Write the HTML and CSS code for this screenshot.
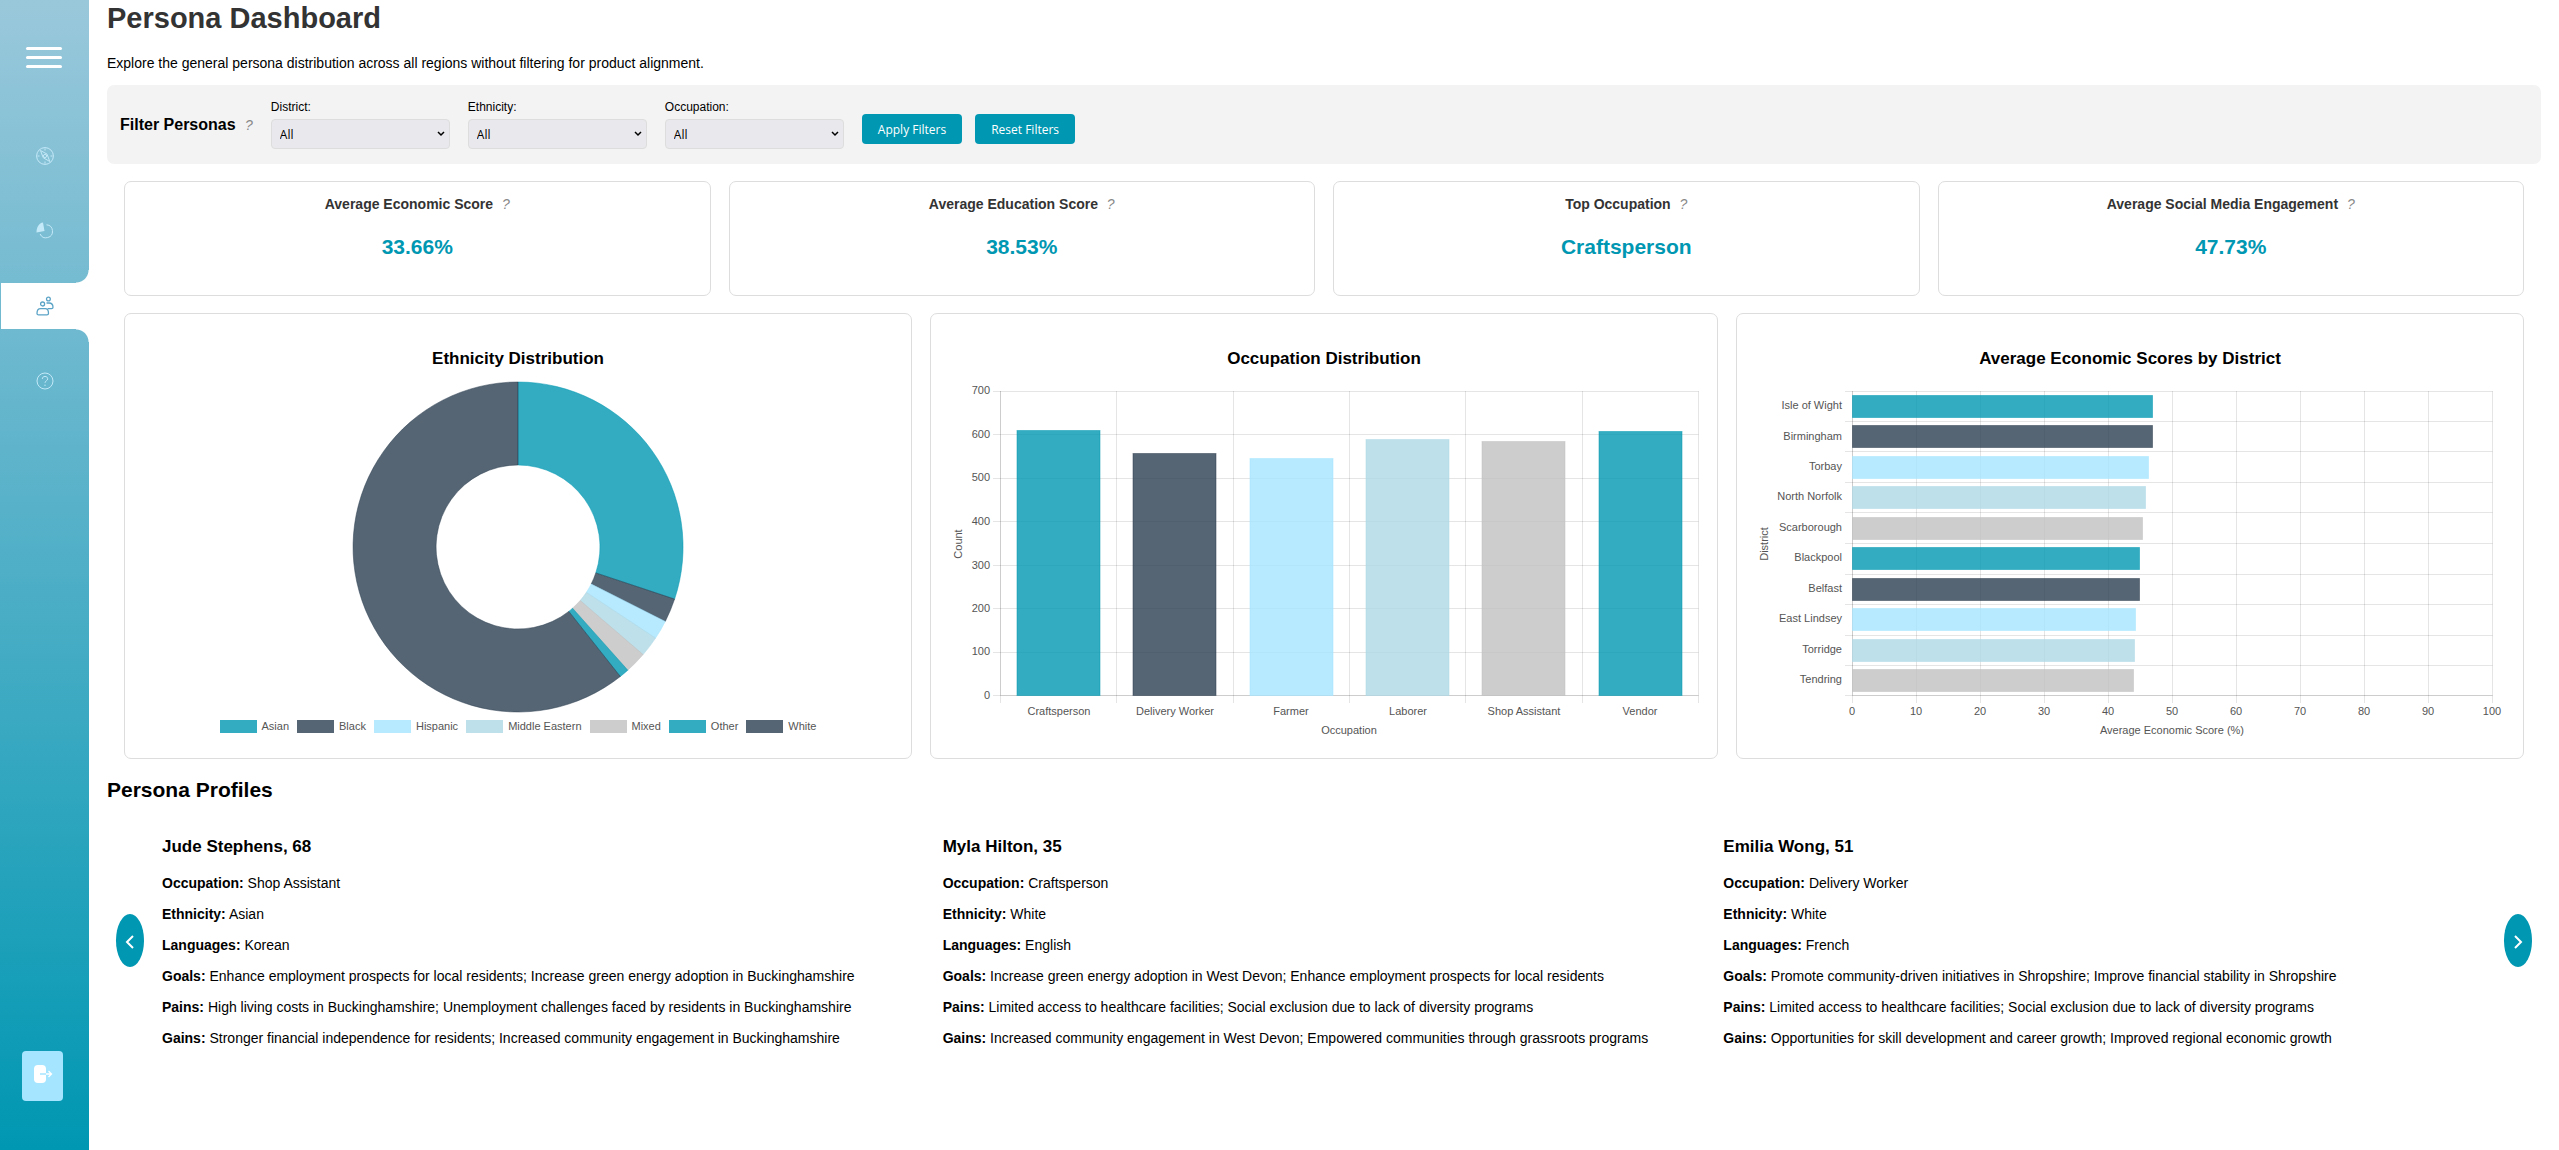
FILE: index.html
```html
<!DOCTYPE html>
<html lang="en">
<head>
<meta charset="utf-8">
<title>Persona Dashboard</title>
<link rel="stylesheet" href="styles.css">
</head>
<body>
<div class="layout">
  <nav class="sidebar" aria-label="Main">
    <button class="menu-toggle" aria-label="Toggle menu"><span></span><span></span><span></span></button>
    <ul class="nav-list">
      <li><a class="nav-link" href="#explore" aria-label="Explore">
        <svg width="18" height="18" viewBox="0 0 18 18" fill="none" stroke="currentColor"><circle cx="9" cy="9" r="8.400"/><path d="M4.500 3.500l6.500 3.600 2.800 7.400-6.600-3.800z"/><circle cx="9" cy="9" r="1.600"/><path d="M9 1.500v2M9 14.500v2M1.500 9h2M14.500 9h2"/></svg>
      </a></li>
      <li><a class="nav-link" href="#analytics" aria-label="Analytics">
        <svg width="18" height="18" viewBox="0 0 18 18" fill="none" stroke="currentColor"><path d="M.5 10.500C.500 5 3 1 7 .5l1.500 8.500z" fill="currentColor" stroke="none"/><path d="M10.500 2.800a6.500 6.500 0 1 1-6.400 9.200"/></svg>
      </a></li>
      <li class="active"><a class="nav-link" href="#personas" aria-label="Personas" aria-current="page">
        <svg width="18" height="20" viewBox="0 0 18 20" fill="none" stroke="currentColor" stroke-width="1.300"><circle cx="12.400" cy="3" r="1.900"/><circle cx="6.600" cy="8" r="2"/><path d="M10.500 7h2.500c2.600 0 4 1.800 4 4.300 0 .9-.6 1.300-1.400 1.300h-4"/><path d="M1 17.200c0-3 1.300-4.600 3.600-4.600h4.600c2.200 0 3.300 1.600 3.300 4.600 0 1-.5 1.600-1.500 1.600H2.500c-1 0-1.500-.6-1.500-1.600z"/></svg>
      </a></li>
      <li><a class="nav-link" href="#help" aria-label="Help">
        <svg width="18" height="18" viewBox="0 0 18 18" fill="none" stroke="currentColor"><circle cx="9" cy="9" r="8"/><path d="M6.300 7c0-1.600 1.200-2.600 2.700-2.600s2.700 1 2.700 2.400c0 2-2.700 2-2.700 4M9 12.600v1.400"/></svg>
      </a></li>
    </ul>
    <button class="logout" aria-label="Log out">
      <svg width="20" height="20" viewBox="0 0 20 20"><rect x="1" y="1" width="12" height="18" rx="4" fill="#fff"/><path d="M7 10h6" stroke="#a5e5ff" stroke-width="1.500"/><path d="M13 10h5M15.500 7l3 3-3 3" fill="none" stroke="#fff" stroke-width="1.300"/></svg>
    </button>
  </nav>

  <main class="content">
    <h1>Persona Dashboard</h1>
    <p class="intro">Explore the general persona distribution across all regions without filtering for product alignment.</p>

    <form class="filters">
      <h2 class="filters-title">Filter Personas <i class="hint">?</i></h2>
      <div class="field"><label for="district">District:</label><select id="district"><option>All</option></select></div>
      <div class="field"><label for="ethnicity">Ethnicity:</label><select id="ethnicity"><option>All</option></select></div>
      <div class="field"><label for="occupation">Occupation:</label><select id="occupation"><option>All</option></select></div>
      <div class="actions">
        <button class="btn" type="button">Apply Filters</button>
        <button class="btn" type="button">Reset Filters</button>
      </div>
    </form>

    <section class="stats">
      <article class="card stat"><h3>Average Economic Score <i class="hint">?</i></h3><p>33.66%</p></article>
      <article class="card stat"><h3>Average Education Score <i class="hint">?</i></h3><p>38.53%</p></article>
      <article class="card stat"><h3>Top Occupation <i class="hint">?</i></h3><p>Craftsperson</p></article>
      <article class="card stat"><h3>Average Social Media Engagement <i class="hint">?</i></h3><p>47.73%</p></article>
    </section>

    <section class="charts">
      <article class="card chart">
        <h3>Ethnicity Distribution</h3>
        <svg class="plot" viewBox="0 0 750 337" role="img" aria-label="Ethnicity distribution">
          <path class="series teal" d="M375 7A165 165 0 0 1 531.600 224.100L452.800 197.900A82 82 0 0 0 375 90z"/>
          <path class="series navy" d="M531.600 224.100A165 165 0 0 1 522.300 246.400L448.200 209A82 82 0 0 0 452.800 197.900z"/>
          <path class="series sky" d="M522.300 246.400A165 165 0 0 1 512.600 263.100L443.400 217.300A82 82 0 0 0 448.200 209z"/>
          <path class="series powder" d="M512.600 263.100A165 165 0 0 1 500.100 279.600L437.200 225.500A82 82 0 0 0 443.400 217.300z"/>
          <path class="series grey" d="M500.100 279.600A165 165 0 0 1 484.800 295.200L429.500 233.200A82 82 0 0 0 437.200 225.500z"/>
          <path class="series teal" d="M484.800 295.200A165 165 0 0 1 477.300 301.500L425.800 236.400A82 82 0 0 0 429.500 233.200z"/>
          <path class="series navy" d="M477.300 301.500A165 165 0 1 1 375 7L375 90A82 82 0 1 0 425.800 236.400z"/>
        </svg>
        <ul class="legend">
          <li><span class="swatch teal"></span>Asian</li>
          <li><span class="swatch navy"></span>Black</li>
          <li><span class="swatch sky"></span>Hispanic</li>
          <li><span class="swatch powder"></span>Middle Eastern</li>
          <li><span class="swatch grey"></span>Mixed</li>
          <li><span class="swatch teal"></span>Other</li>
          <li><span class="swatch navy"></span>White</li>
        </ul>
      </article>

      <article class="card chart">
        <h3>Occupation Distribution</h3>
        <svg class="plot" viewBox="0 0 750 365" role="img" aria-label="Occupation distribution">
          <path class="grid" d="M44 16.500H749.500M44 59.500H749.500M44 103.500H749.500M44 146.500H749.500M44 190.500H749.500M44 233.500H749.500M44 277.500H749.500M44 320.500H749.500M51.500 16V328M167.500 16V328M284.500 16V328M400.500 16V328M516.500 16V328M633.500 16V328M749.500 16V328"/>
          <path class="grid" d="M51.500 16V320.500H749.500"/>
          <rect class="series teal" x="68" y="55.500" width="83" height="265"/>
          <rect class="series navy" x="184" y="78.500" width="83" height="242"/>
          <rect class="series sky" x="301" y="83.500" width="83" height="237"/>
          <rect class="series powder" x="417" y="64.500" width="83" height="256"/>
          <rect class="series grey" x="533" y="66.500" width="83" height="254"/>
          <rect class="series teal" x="650" y="56.500" width="83" height="264"/>
          <g class="tick end"><text x="41" y="19">700</text><text x="41" y="63">600</text><text x="41" y="106">500</text><text x="41" y="150">400</text><text x="41" y="194">300</text><text x="41" y="237">200</text><text x="41" y="280">100</text><text x="41" y="324">0</text></g>
          <g class="tick mid"><text x="110" y="340">Craftsperson</text><text x="226" y="340">Delivery Worker</text><text x="342" y="340">Farmer</text><text x="459" y="340">Laborer</text><text x="575" y="340">Shop Assistant</text><text x="691" y="340">Vendor</text><text x="400" y="359">Occupation</text><text transform="translate(13 169) rotate(-90)">Count</text></g>
        </svg>
      </article>

      <article class="card chart">
        <h3>Average Economic Scores by District</h3>
        <svg class="plot" viewBox="0 0 750 365" role="img" aria-label="Average economic scores by district">
          <path class="grid" d="M90 16.500H737.500M90 46.500H737.500M90 76.500H737.500M90 107.500H737.500M90 137.500H737.500M90 168.500H737.500M90 199.500H737.500M90 229.500H737.500M90 260.500H737.500M90 290.500H737.500M90 320.500H737.500M97.500 16V328M161.500 16V328M225.500 16V328M289.500 16V328M353.500 16V328M417.500 16V328M481.500 16V328M545.500 16V328M609.500 16V328M673.500 16V328M737.500 16V328"/>
          <path class="grid" d="M97.500 16V320.500H737.500"/>
          <rect class="series teal" x="97.500" y="20.500" width="300" height="22"/>
          <rect class="series navy" x="97.500" y="50.500" width="300" height="22"/>
          <rect class="series sky" x="97.500" y="81.500" width="296" height="22"/>
          <rect class="series powder" x="97.500" y="111.500" width="293" height="22"/>
          <rect class="series grey" x="97.500" y="142.500" width="290" height="22"/>
          <rect class="series teal" x="97.500" y="172.500" width="287" height="22"/>
          <rect class="series navy" x="97.500" y="203.500" width="287" height="22"/>
          <rect class="series sky" x="97.500" y="233.500" width="283" height="22"/>
          <rect class="series powder" x="97.500" y="264.500" width="282" height="22"/>
          <rect class="series grey" x="97.500" y="294.500" width="281" height="22"/>
          <g class="tick end"><text x="87" y="34">Isle of Wight</text><text x="87" y="65">Birmingham</text><text x="87" y="95">Torbay</text><text x="87" y="125">North Norfolk</text><text x="87" y="156">Scarborough</text><text x="87" y="186">Blackpool</text><text x="87" y="217">Belfast</text><text x="87" y="247">East Lindsey</text><text x="87" y="278">Torridge</text><text x="87" y="308">Tendring</text></g>
          <g class="tick mid"><text x="97" y="340">0</text><text x="161" y="340">10</text><text x="225" y="340">20</text><text x="289" y="340">30</text><text x="353" y="340">40</text><text x="417" y="340">50</text><text x="481" y="340">60</text><text x="545" y="340">70</text><text x="609" y="340">80</text><text x="673" y="340">90</text><text x="737" y="340">100</text><text x="417" y="359">Average Economic Score (%)</text><text transform="translate(13 169) rotate(-90)">District</text></g>
        </svg>
      </article>
    </section>

    <h2 class="profiles-title">Persona Profiles</h2>
    <section class="carousel">
      <button class="arrow" aria-label="Previous personas"><svg width="10" height="14" viewBox="0 0 10 14"><path d="M8 1L2 7l6 6" fill="none" stroke="#fff" stroke-width="2"/></svg></button>
      <div class="profiles">
        <article class="profile">
          <h3>Jude Stephens, 68</h3>
          <p><b>Occupation:</b> Shop Assistant</p>
          <p><b>Ethnicity:</b> Asian</p>
          <p><b>Languages:</b> Korean</p>
          <p><b>Goals:</b> Enhance employment prospects for local residents; Increase green energy adoption in Buckinghamshire</p>
          <p><b>Pains:</b> High living costs in Buckinghamshire; Unemployment challenges faced by residents in Buckinghamshire</p>
          <p><b>Gains:</b> Stronger financial independence for residents; Increased community engagement in Buckinghamshire</p>
        </article>
        <article class="profile">
          <h3>Myla Hilton, 35</h3>
          <p><b>Occupation:</b> Craftsperson</p>
          <p><b>Ethnicity:</b> White</p>
          <p><b>Languages:</b> English</p>
          <p><b>Goals:</b> Increase green energy adoption in West Devon; Enhance employment prospects for local residents</p>
          <p><b>Pains:</b> Limited access to healthcare facilities; Social exclusion due to lack of diversity programs</p>
          <p><b>Gains:</b> Increased community engagement in West Devon; Empowered communities through grassroots programs</p>
        </article>
        <article class="profile">
          <h3>Emilia Wong, 51</h3>
          <p><b>Occupation:</b> Delivery Worker</p>
          <p><b>Ethnicity:</b> White</p>
          <p><b>Languages:</b> French</p>
          <p><b>Goals:</b> Promote community-driven initiatives in Shropshire; Improve financial stability in Shropshire</p>
          <p><b>Pains:</b> Limited access to healthcare facilities; Social exclusion due to lack of diversity programs</p>
          <p><b>Gains:</b> Opportunities for skill development and career growth; Improved regional economic growth</p>
        </article>
      </div>
      <button class="arrow" aria-label="Next personas"><svg width="10" height="14" viewBox="0 0 10 14"><path d="M2 1l6 6-6 6" fill="none" stroke="#fff" stroke-width="2"/></svg></button>
    </section>
  </main>
</div>
</body>
</html>
```
FILE: styles.css
```css
* { box-sizing: border-box; }

:root {
  --teal: #0097b2;
  --navy: #2b3e50;
  --sky: #a5e5ff;
  --powder: #add8e6;
  --grey: #c0c0c0;
}

body {
  margin: 0;
  background: #fff;
  color: #000;
  font: 14px/16px "Liberation Sans", Arial, sans-serif;
}

h1, h2, h3, p, ul { margin: 0; padding: 0; }
ul { list-style: none; }
button { border: 0; padding: 0; cursor: pointer; }

.layout { display: flex; min-height: 100vh; }

/* Sidebar */
.sidebar {
  width: 89px;
  flex: none;
  display: flex;
  flex-direction: column;
  background: linear-gradient(180deg, #9ac8db 0%, #62b5cc 37%, #0097b2 100%);
}
.menu-toggle {
  align-self: flex-start;
  display: flex;
  flex-direction: column;
  gap: 6px;
  margin: 47px 0 65px 26px;
  background: none;
}
.menu-toggle span { width: 36px; height: 3px; border-radius: 2px; background: #fff; }
.nav-list { display: flex; flex-direction: column; gap: 29px; }
.nav-link {
  display: flex;
  align-items: center;
  justify-content: center;
  height: 46px;
  color: #c4e9f8;
}
.active { position: relative; margin-left: 1px; background: #fff; }
.active .nav-link { color: #5ba3c6; }
.active::before, .active::after {
  content: "";
  position: absolute;
  right: 0;
  width: 13px;
  height: 13px;
}
.active::before { bottom: 100%; background: radial-gradient(circle at 0 0, transparent 12px, #fff 13px); }
.active::after { top: 100%; background: radial-gradient(circle at 0 100%, transparent 12px, #fff 13px); }
.logout {
  display: flex;
  align-items: center;
  justify-content: center;
  width: 41px;
  height: 50px;
  margin: auto 0 49px 22px;
  padding-bottom: 4px;
  border-radius: 4px;
  background: var(--sky);
}

/* Content */
.content { flex: 1; min-width: 0; padding: 0 18px; }
h1 { font-size: 29px; line-height: 36px; color: #333; }
.intro { margin: 19px 0 14px; }

.filters {
  display: flex;
  align-items: center;
  gap: 18px;
  min-height: 79px;
  padding: 0 13px;
  border-radius: 7px;
  background: #f3f3f3;
}
.filters-title { font-size: 16px; line-height: 18px; }
.hint { margin-left: 5px; font-size: 14px; font-weight: normal; color: #888; }
.field { display: flex; flex-direction: column; gap: 5px; }
.field label { font-size: 12px; line-height: 14px; }
.field select {
  appearance: none;
  width: 179px;
  height: 30px;
  padding: 0 8px;
  border: 1px solid #ddd;
  border-radius: 4px;
  background: #e9e9ed url("data:image/svg+xml,%3Csvg xmlns='http://www.w3.org/2000/svg' width='8' height='6'%3E%3Cpath d='M1 1l3 3 3-3' fill='none' stroke='%23000' stroke-width='1.500'/%3E%3C/svg%3E") no-repeat right 4px center;
  color: #000;
  font: 12px "Open Sans", sans-serif;
}
.actions { display: flex; gap: 13px; padding-top: 9px; }
.btn {
  height: 30px;
  padding: 0 16px;
  border-radius: 4px;
  background: var(--teal);
  color: #fff;
  font: 12px "Open Sans", sans-serif;
}

.card { border: 1px solid #ddd; border-radius: 7px; background: #fff; }
.stats, .charts { display: grid; gap: 18px; margin: 17px 17px 0; }
.stats { grid-template-columns: repeat(4, 1fr); }
.charts { grid-template-columns: repeat(3, 1fr); }

.stat { min-height: 115px; padding: 13px; text-align: center; }
.stat h3 { font-size: 14px; line-height: 18px; color: #333; }
.stat p { margin-top: 22px; font-size: 21px; line-height: 24px; font-weight: bold; color: var(--teal); }

.chart { padding: 18px; }
.chart h3 { margin: 17px 0 7px; font-size: 17px; line-height: 19px; text-align: center; }
.plot { display: block; width: 100%; height: auto; overflow: visible; }
.grid { fill: none; stroke: rgba(0, 0, 0, 0.1); }
.series { fill-opacity: 0.8; stroke-opacity: 0.5; }
.series.teal { fill: var(--teal); stroke: var(--teal); }
.series.navy { fill: var(--navy); stroke: var(--navy); }
.series.sky { fill: var(--sky); stroke: var(--sky); }
.series.powder { fill: var(--powder); stroke: var(--powder); }
.series.grey { fill: var(--grey); stroke: var(--grey); }
.tick { font-size: 11px; fill: #555; }
.end { text-anchor: end; }
.mid { text-anchor: middle; }

.legend { display: flex; justify-content: center; gap: 8px; margin-top: 8px; font-size: 11px; line-height: 13px; color: #555; }
.legend li { display: flex; gap: 5px; }
.swatch { width: 37px; height: 13px; opacity: 0.8; }
.swatch.teal { background: var(--teal); }
.swatch.navy { background: var(--navy); }
.swatch.sky { background: var(--sky); }
.swatch.powder { background: var(--powder); }
.swatch.grey { background: var(--grey); }

/* Persona carousel */
.profiles-title { margin-top: 19px; font-size: 21px; line-height: 24px; }
.carousel { display: flex; align-items: center; gap: 9px; margin: 0 9px; }
.arrow {
  display: flex;
  align-items: center;
  justify-content: center;
  flex: none;
  width: 28px;
  height: 53px;
  padding-top: 4px;
  border-radius: 50%;
  background: var(--teal);
}
.profiles { flex: 1; display: grid; grid-template-columns: repeat(3, 1fr); }
.profile { display: flex; flex-direction: column; gap: 15px; padding: 35px 9px 32px; }
.profile h3 { margin-bottom: 4px; font-size: 17px; line-height: 19px; }
```
